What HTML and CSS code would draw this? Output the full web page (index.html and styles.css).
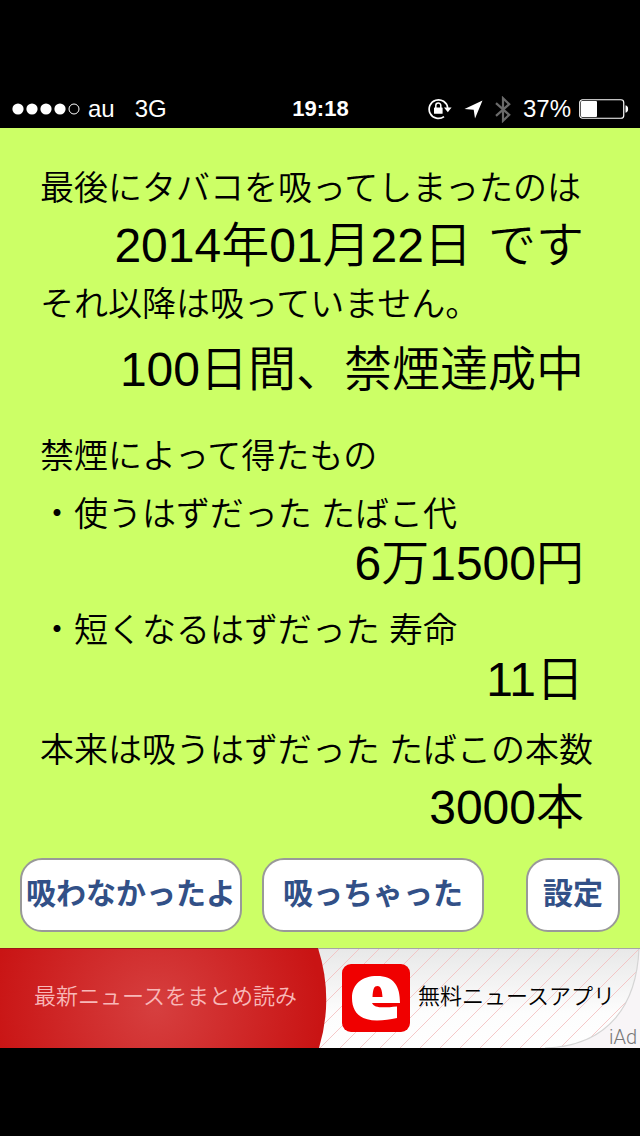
FILE: index.html
```html
<!DOCTYPE html>
<html lang="ja">
<head>
<meta charset="utf-8">
<meta name="viewport" content="width=device-width, initial-scale=1">
<title>禁煙カウンター</title>
<link rel="stylesheet" href="styles.css">
</head>
<body>
<header class="status">
  <div class="status-left">
    <svg class="signal" width="68" height="12" viewBox="0 0 68 12" aria-hidden="true">
      <g fill="#fff"><circle cx="6" cy="6" r="5.6"/><circle cx="20" cy="6" r="5.6"/><circle cx="34" cy="6" r="5.6"/><circle cx="48" cy="6" r="5.6"/></g>
      <circle cx="62" cy="6" r="5" fill="none" stroke="#fff"/>
    </svg>
    <span>au</span>
    <span class="network">3G</span>
  </div>
  <time class="clock">19:18</time>
  <div class="status-right">
    <svg width="24" height="22" viewBox="0 0 24 22" aria-hidden="true">
      <path d="M16 18.6A9.3 9.3 0 1 1 19.7 10" fill="none" stroke="#fff" stroke-width="1.7"/>
      <path d="M16 9.6h7.600l-3.800 4.600z" fill="#fff"/>
      <rect x="6" y="9.4" width="8.6" height="6.4" rx=".6" fill="#fff"/>
      <path d="M7.800 10V7.600a2.500 2.500 0 0 1 5 0V10" fill="none" stroke="#fff" stroke-width="1.5"/>
    </svg>
    <svg class="location" width="19" height="19" viewBox="0 0 19 19" aria-hidden="true">
      <path d="M18.500.5 11 18.500 9.700 9.800.5 9z" fill="#fff"/>
    </svg>
    <svg class="bluetooth" width="16" height="27" viewBox="0 0 16 27" aria-hidden="true">
      <path d="M1 7.200 14.200 18.800 8 24.800V2.200l6.200 6L1 19.800" fill="none" stroke="#6a6a6a" stroke-width="2.200"/>
    </svg>
    <span>37%</span>
    <svg class="battery" width="50" height="20" viewBox="0 0 50 20" aria-hidden="true">
      <rect x=".75" y=".75" width="44" height="18.500" rx="2.800" fill="none" stroke="#fff" stroke-width="1.200"/>
      <rect x="2" y="2" width="16" height="16" rx="1" fill="#fff"/>
      <path d="M46.500 6.300q2.600.6 2.600 3.700t-2.600 3.700z" fill="#fff"/>
    </svg>
  </div>
</header>

<main class="counter">
  <section class="summary">
    <p class="label">最後にタバコを吸ってしまったのは</p>
    <p class="value date">2014年01月22日&emsp13;です</p>
    <p class="label">それ以降は吸っていません。</p>
    <p class="value days">100日間、禁煙達成中</p>
  </section>
  <section class="gains">
    <h2 class="label heading">禁煙によって得たもの</h2>
    <p class="label">・使うはずだった たばこ代</p>
    <p class="value">6万1500円</p>
    <p class="label lifespan">・短くなるはずだった 寿命</p>
    <p class="value">11日</p>
    <p class="label count">本来は吸うはずだった たばこの本数</p>
    <p class="value total">3000本</p>
  </section>
  <nav class="actions">
    <button class="action" type="button">吸わなかったよ</button>
    <button class="action" type="button">吸っちゃった</button>
    <button class="action settings" type="button">設定</button>
  </nav>
</main>

<a class="ad" href="#">
  <svg class="ad-art" viewBox="0 0 640 100" preserveAspectRatio="none" aria-hidden="true">
    <defs>
      <linearGradient id="paper" x2="0" y2="1"><stop stop-color="#e8e8e8"/><stop offset=".65" stop-color="#fdfdfd"/><stop offset="1" stop-color="#fff"/></linearGradient>
      <radialGradient id="red" gradientUnits="userSpaceOnUse" cx="156" cy="60" r="165"><stop stop-color="#d63f3f"/><stop offset="1" stop-color="#c91414"/></radialGradient>
      <pattern id="stripes" width="20" height="20" patternUnits="userSpaceOnUse"><path d="M-1 21 21-1" stroke="#f4bcbc" stroke-opacity=".8"/></pattern>
    </defs>
    <rect width="640" height="100" fill="#f8f5f7"/>
    <path d="M300 0H639C637 55 610 98 545 100H300z" fill="url(#paper)"/>
    <path d="M300 0H639C637 55 610 98 545 100H300z" fill="url(#stripes)"/>
    <path d="M639 0C637 55 610 98 545 100" fill="none" stroke="#d5d5d5" stroke-width="1.200"/>
    <path d="M0 0H318Q334 50 319 100H0z" fill="url(#red)"/>
    <path d="M0 .5H318" stroke="#9d1717"/>
    <path d="M318 .5H640" stroke="#a5a5a5"/>
  </svg>
  <span class="ad-lead">最新ニュースをまとめ読み</span>
  <span class="ad-app">
    <svg width="68" height="68" viewBox="0 0 68 68" aria-hidden="true">
      <rect width="68" height="68" rx="9" fill="#f00000"/>
      <path fill="#fff" fill-rule="evenodd" d="M58 39H30C32 44 40 44 55 42.500V54C48 55.500 42 56.500 35 56.500 18 56.500 10 48 10 34 10 20 20 12 35 12 52 12 58 22 58 39zM30.500 33C31 25 32 22 35.500 22S40 26 40.500 33z"/>
    </svg>
    <span class="ad-name">無料ニュースアプリ</span>
  </span>
  <span class="ad-mark">iAd</span>
</a>
</body>
</html>
```
FILE: styles.css
```css
* {
  box-sizing: border-box;
}

body {
  margin: 0;
  min-height: 100vh;
  padding-top: 90px;
  background: #000;
  color: #000;
  font-family: "Liberation Sans", "Noto Sans CJK JP", sans-serif;
}

p,
h2 {
  margin: 0;
}

.status {
  display: grid;
  grid-template-columns: 1fr auto 1fr;
  align-items: center;
  height: 38px;
  padding: 0 11px 0 12px;
  color: #fff;
  font-size: 24px;
}

.status-left,
.status-right {
  display: flex;
  align-items: center;
}

.status-right {
  justify-content: flex-end;
}

.signal {
  margin-right: 8px;
}

.network {
  margin-left: 20px;
}

.clock {
  font-weight: bold;
  font-size: 22px;
}

.location {
  margin-left: 12px;
}

.bluetooth {
  margin: 0 12px;
}

.battery {
  margin-left: 8px;
}

.counter {
  padding-top: 40px;
  background: #cf6;
}

.summary,
.gains {
  padding: 0 56px 0 40px;
}

.label {
  font-size: 34px;
  font-weight: 350;
  line-height: 40px;
  white-space: nowrap;
}

.value {
  font-size: 48px;
  font-weight: 350;
  line-height: 56px;
  text-align: right;
  white-space: nowrap;
}

.date {
  margin: 10px 0;
}

.days {
  margin-top: 18px;
}

.heading {
  margin: 38px 0 18px;
}

.lifespan {
  margin-top: 18px;
}

.count {
  margin-top: 22px;
}

.gains .value {
  margin-top: 2px;
}

.gains .total {
  margin-top: 10px;
}

.actions {
  display: flex;
  gap: 20px;
  padding: 22px 20px 16px;
}

.action {
  width: 222px;
  height: 74px;
  padding: 0 0 8px;
  border: 2px solid #999;
  border-radius: 22px;
  background: #fff;
  color: #325087;
  font: bold 30px "Liberation Sans", "Noto Sans CJK JP", sans-serif;
  white-space: nowrap;
}

.settings {
  width: 94px;
  margin-left: auto;
}

.ad {
  display: grid;
  grid-template-columns: 342fr 298fr;
  align-items: center;
  position: relative;
  height: 100px;
  color: #000;
  font-size: 22px;
  font-weight: 350;
  text-decoration: none;
  white-space: nowrap;
}

.ad-art {
  position: absolute;
  inset: 0;
  width: 100%;
  height: 100%;
}

.ad-lead,
.ad-app {
  position: relative;
}

.ad-lead {
  padding: 0 0 8px 34px;
  color: #f8b8b8;
}

.ad-app {
  display: flex;
  align-items: center;
  gap: 8px;
}

.ad-name {
  padding-bottom: 8px;
}

.ad-mark {
  position: absolute;
  right: 3px;
  bottom: 0;
  color: #777;
  font-family: Roboto, "Liberation Sans", sans-serif;
  font-size: 20px;
  font-weight: 300;
  line-height: 22px;
}
```
